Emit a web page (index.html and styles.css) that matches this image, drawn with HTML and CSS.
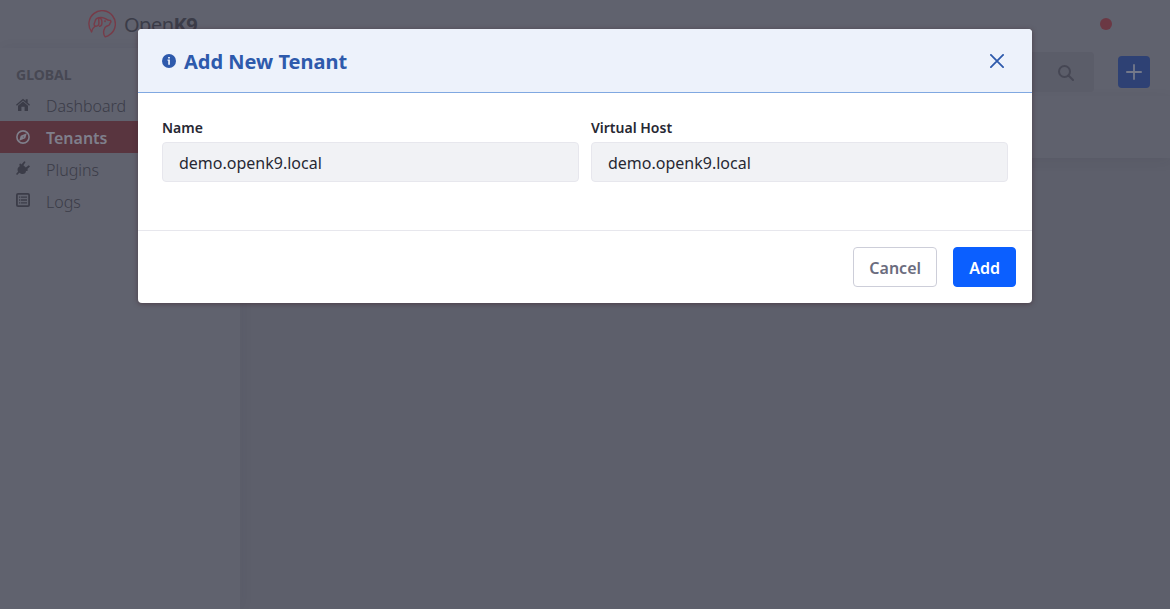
FILE: index.html
```html
<!DOCTYPE html>
<html lang="en">
<head>
<meta charset="utf-8">
<title>OpenK9</title>
<link rel="stylesheet" href="styles.css">
</head>
<body>
<div class="app">
  <header class="topbar">
    <div class="brand">
      <svg class="brand-logo" width="28" height="28" viewBox="0 0 28 28" fill="none" stroke="currentColor" stroke-width="1.400" stroke-linecap="round" stroke-linejoin="round"><path d="M3.500 21.700A13.200 13.200 0 1 1 22.500 24.100C20.800 25.800 19 26.600 17.200 26.900 15.600 24.800 15.300 22.500 15.900 20.300 16.400 18.300 17 16.900 18.600 16.200 20.400 15.800 21.900 15.400 22 13.300 23.300 12.300 23.100 10.800 22.200 10.300 20.500 10.500 19.200 9.900 17.800 8.900 15.700 7.500 12.900 7.200 10.800 7.700"/><path d="M10.800 7.700C8.700 7.900 7.500 9.200 7.100 11.200 6.900 12.700 5.600 13.700 6.200 15.100 7 17.100 10.400 16.200 10.800 14.300 11.200 12.300 10.500 10.200 10.800 7.700ZM10.900 7.700C13 8 13.900 9.800 13.900 12 14.100 14.600 13.500 16 11.600 16.300M6.900 16.300C5.400 17.500 4.200 19.200 3.500 21.700"/><circle cx="17" cy="11.300" r=".35"/></svg>
      <span class="brand-name">Open<b>K9</b></span>
    </div>
    <span class="status"></span>
  </header>
  <div class="columns">
    <nav class="sidebar">
      <h2 class="nav-title">GLOBAL</h2>
      <a class="nav-item"><svg class="nav-icon lowered" viewBox="0 0 14 14" fill="currentColor"><path d="M7 .7 9.700 3V1.200h2v3.500L14 6.700l-.9 1L7 2.600.9 7.700 0 6.700Z"/><path d="M7 3.600 12 7.800V13H8.600V8.800H5.400V13H2V7.800Z"/></svg>Dashboard</a>
      <a class="nav-item active"><svg class="nav-icon lowered" viewBox="0 0 14 14"><circle cx="7" cy="7" r="6.100" fill="none" stroke="currentColor" stroke-width="1.600"/><path fill="currentColor" fill-rule="evenodd" d="m10.800 3.200-1.500 5.100-6.100 2.500 1.500-5.100ZM7.300 6.500a.5.500 0 1 0 .01 0Z"/></svg>Tenants</a>
      <a class="nav-item"><svg class="nav-icon" viewBox="0 0 14 14" fill="currentColor"><path d="m3.300 3 1.300-.5.800.9L8.300.2l1.300.8-2.200 3.200 2.400 2.400 3-2.400 1.200 1.200-2.700 2.600.6 1-.7 1.100H10c-.1 2.500-2.300 3.500-5 2.700L3.300 11.800l-2.200 2.100L0 12.900l2-2.100C1 8.500 1.600 6.200 3.700 5.300Z"/></svg>Plugins</a>
      <a class="nav-item"><svg class="nav-icon" viewBox="0 0 14 14"><rect x=".9" y=".9" width="12.200" height="12.200" rx="1.200" fill="none" stroke="currentColor" stroke-width="1.800"/><path fill="currentColor" d="M3 3.400h1.300v1.400H3ZM5 3.400h6v1.400H5ZM3 6.300h1.300v1.400H3ZM5 6.300h6v1.400H5ZM3 9.200h1.300v1.400H3ZM5 9.200h6v1.400H5Z"/></svg>Logs</a>
    </nav>
    <main class="content">
      <div class="toolbar">
        <div class="search"><svg width="16" height="16" viewBox="0 0 16 16" fill="none" stroke="currentColor" stroke-width="2"><circle cx="6.500" cy="6.500" r="5.500"/><path d="m10.500 10.500 4.500 4.500" stroke-linecap="round"/></svg></div>
        <div class="create"><svg width="16" height="16" viewBox="0 0 16 16" stroke="currentColor" stroke-width="1.800" stroke-linecap="round"><path d="M8 .9v14.200M.9 8h14.200"/></svg></div>
      </div>
      <div class="panel"></div>
    </main>
  </div>
</div>
<div class="modal" role="dialog" aria-label="Add New Tenant">
  <div class="modal-header">
    <svg class="info" width="14" height="14" viewBox="0 0 14 14"><circle cx="7" cy="7" r="7" fill="currentColor"/><path fill="#edf2fb" d="M6.100 2.900h1.800v1.600H6.100ZM5.500 5.600h2.400v5.200H6.200V6.800h-.7Z"/></svg>
    <h1 class="modal-title">Add New Tenant</h1>
    <svg class="close" width="14" height="14" viewBox="0 0 14 14" stroke="currentColor" stroke-width="1.800" stroke-linecap="round"><path d="m.9.9 12.200 12.200M13.100.9.9 13.100"/></svg>
  </div>
  <div class="modal-body">
    <label class="field">Name<input class="input" value="demo.openk9.local"></label>
    <label class="field">Virtual Host<input class="input" value="demo.openk9.local"></label>
  </div>
  <div class="modal-footer">
    <button class="btn cancel">Cancel</button>
    <button class="btn primary">Add</button>
  </div>
</div>
</body>
</html>
```
FILE: styles.css
```css
* { box-sizing: border-box; }
body {
  margin: 0;
  font-family: "Noto Sans", sans-serif;
  font-size: 16px;
  line-height: 24px;
  overflow: hidden;
}
.app {
  height: 609px;
  display: flex;
  flex-direction: column;
  background: #5d5f6b;
  color: #3b3c48;
}
.topbar {
  height: 48px;
  flex: none;
  display: flex;
  align-items: center;
  justify-content: space-between;
  padding: 0 58px 0 88px;
  background: #60626e;
}
.brand { display: flex; align-items: center; gap: 8px; }
.brand-logo { color: #773b48; }
.brand-name { font-size: 20px; letter-spacing: -.5px; padding-top: 2px; }
.status { width: 12px; height: 12px; border-radius: 50%; background: #6b3844; }
.columns { flex: 1; display: flex; }
.sidebar {
  width: 240px;
  padding-top: 17px;
  background: #60626e;
  box-shadow: 2px 0 12px rgba(39, 40, 51, .05);
}
.nav-title {
  margin: 0;
  padding-left: 16px;
  font-size: 14px;
  line-height: 20px;
  font-weight: 700;
  color: #474853;
  height: 24px;
}
.nav-item {
  height: 32px;
  display: flex;
  align-items: center;
  gap: 16px;
  padding: 2px 16px 0;
  font-weight: 300;
}
.nav-item.active { background: #59353f; color: #7f7f8b; font-weight: 600; }
.nav-icon { width: 14px; height: 14px; flex: none; margin: -4px 0 0; }
.nav-icon.lowered { margin-top: -2px; }
.content { flex: 1; }
.toolbar {
  height: 48px;
  display: flex;
  align-items: center;
  gap: 24px;
  padding: 0 20px 0 16px;
  background: #60626e;
}
.search {
  flex: 1;
  height: 40px;
  display: flex;
  align-items: center;
  justify-content: flex-end;
  padding: 2px 20px 0 0;
  border-radius: 4px;
  background: #5b5d69;
  color: #464754;
}
.create {
  width: 32px;
  height: 32px;
  display: grid;
  place-items: center;
  border-radius: 4px;
  background: #2e4174;
  color: #74798a;
}
.panel { height: 62px; background: #5f616d; box-shadow: 0 3px 12px rgba(39, 40, 51, .08); }
.modal {
  position: absolute;
  left: 138px;
  top: 29px;
  width: 894px;
  border-radius: 4px;
  overflow: hidden;
  background: #fff;
  box-shadow: 0 1px 5px rgba(65, 40, 50, .6);
}
.modal-header {
  height: 64px;
  display: flex;
  align-items: center;
  padding: 0 28px 0 24px;
  background: #edf2fb;
  border-bottom: 1px solid #80a8e1;
  color: #2e5aac;
}
.modal-title { margin: 2px auto 0 8px; font-size: 20px; line-height: 30px; font-weight: 700; }
.modal-body {
  height: 137px;
  display: grid;
  grid-template-columns: 1fr 1fr;
  gap: 12px;
  align-items: start;
  padding: 24px;
}
.field { font-size: 14px; line-height: 21px; font-weight: 600; color: #272833; }
.input {
  display: block;
  width: 100%;
  height: 40px;
  margin-top: 4px;
  padding: 2px 16px 0;
  border: 1px solid #e7e7ed;
  border-radius: 4px;
  background: #f1f2f5;
  color: #272833;
  font: 16px "Noto Sans", sans-serif;
}
.modal-footer {
  height: 73px;
  display: flex;
  justify-content: flex-end;
  gap: 16px;
  padding: 16px;
  border-top: 1px solid #e7e7ed;
}
.btn {
  height: 40px;
  padding: 2px 15px 0;
  border: 1px solid #cdced9;
  border-radius: 4px;
  background: #fff;
  color: #6b6c7e;
  font: 600 16px "Noto Sans", sans-serif;
}
.btn.cancel { width: 84px; }
.btn.primary { border-color: #0b5fff; background: #0b5fff; color: #fff; }
```
